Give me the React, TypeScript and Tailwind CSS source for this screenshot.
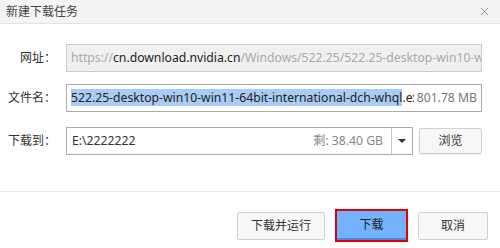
import { X } from 'lucide-react'

function Label({ text }: { text: string }) {
  return <div className="w-[66px] shrink-0 pr-[10px] text-right text-[12px] text-[#333]">{text}</div>
}

export default function App() {
  return (
    <div className="w-[500px] h-[248px] bg-white flex flex-col font-['Noto_Sans','Noto_Sans_CJK_SC',sans-serif]">
      <div className="h-[24px] shrink-0 bg-[#f4f4f4] border-b border-[#e3e3e3] flex items-center justify-between pl-[6px] pr-[9px]">
        <span className="text-[12px] text-[#444]">新建下载任务</span>
        <X className="w-[13px] h-[13px] text-[#666]" strokeWidth={1.2} />
      </div>

      <div className="flex flex-col pr-[18px]">
        <div className="flex items-center mt-[20px]">
          <Label text="网址：" />
          <div className="flex-1 h-[28px] border border-[#cdcdcd] bg-[#f0f0f0] flex items-center px-[4px] overflow-hidden whitespace-nowrap text-[12.2px] text-[#a9a9a9]">
            https://<span className="text-[#222]">cn.download.nvidia.cn</span>/Windows/522.25/522.25-desktop-win10-win11-64bit-international-dch-whql.exe
          </div>
        </div>

        <div className="flex items-center mt-[12px]">
          <Label text="文件名：" />
          <div className="flex-1 h-[28px] border border-[#ababab] bg-white flex items-center pl-[4px] pr-[4px] overflow-hidden whitespace-nowrap text-[12.2px] text-[#222]">
            <div className="flex-1 overflow-hidden">
              <span className="bg-[#a9cbf4]">522.25-desktop-win10-win11-64bit-international-dch-whql</span>.exe
            </div>
            <span className="pl-[3px] text-[#777]">801.78 MB</span>
          </div>
        </div>

        <div className="flex items-center mt-[15px]">
          <Label text="下载到：" />
          <div className="w-[347px] h-[28px] border border-[#ababab] bg-white flex items-center text-[12.2px]">
            <span className="flex-1 pl-[5px] text-[#333]">E:\2222222</span>
            <span className="pr-[8px] text-[#888]">剩: 38.40 GB</span>
            <div className="w-[21px] h-full border-l border-[#c4c4c4] flex items-center justify-center">
              <div className="w-0 h-0 border-l-[4px] border-r-[4px] border-t-[4px] border-l-transparent border-r-transparent border-t-[#333]" />
            </div>
          </div>
          <button className="ml-[6px] w-[63px] h-[26px] border border-[#d0d0d0] rounded-[2px] bg-[#f7f7f7] shadow-[0_1px_1px_rgba(0,0,0,0.08)] text-[12px] text-[#333]">
            浏览
          </button>
        </div>
      </div>

      <div className="mt-[36px] border-t border-[#e8e8e8]" />

      <div className="flex items-center justify-end pr-[12px] mt-[17px]">
        <button className="w-[88px] h-[28px] border border-[#d0d0d0] rounded-[2px] bg-[#f7f7f7] text-[12px] text-[#333]">
          下载并运行
        </button>
        <div className="ml-[10px] w-[73px] h-[33px] border-[2.5px] border-[#e60000] flex">
          <button className="flex-1 bg-[#73b2fd] border-b-[2px] border-[#3f8ee6] text-[12px] text-[#222]">
            下载
          </button>
        </div>
        <button className="ml-[10px] w-[70px] h-[28px] border border-[#d0d0d0] rounded-[2px] bg-[#f7f7f7] text-[12px] text-[#333]">
          取消
        </button>
      </div>
    </div>
  )
}
